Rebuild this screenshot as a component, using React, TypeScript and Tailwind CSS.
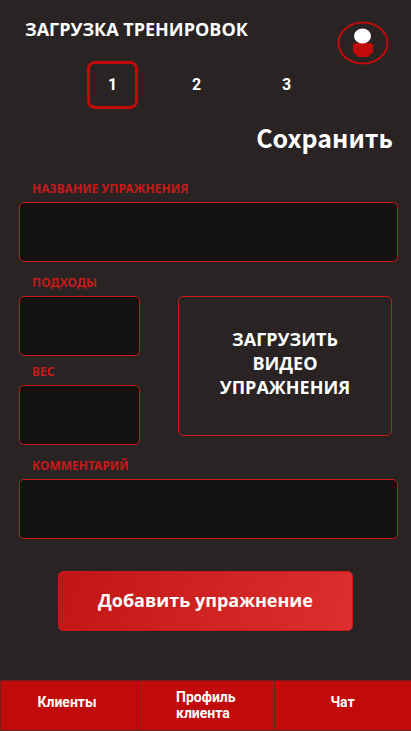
import { useId } from "react";

type FieldProps = { label: string };

function Field({ label }: FieldProps) {
  const id = useId();
  return (
    <div className="flex flex-col">
      <label
        htmlFor={id}
        className="mt-px mb-[3px] ml-[13px] self-start font-['Noto_Sans',sans-serif] text-xs leading-5 font-bold text-[#c61a1a]"
      >
        {label}
      </label>
      <input
        id={id}
        type="text"
        className="h-[60px] w-full rounded-[5px] border border-[#c61a1a] bg-[#131210] px-3 text-base text-white outline-none"
      />
    </div>
  );
}

function Avatar() {
  return (
    <svg width="52" height="44" viewBox="0 0 52 44" aria-hidden="true">
      <ellipse cx="26" cy="22" rx="24.5" ry="20.5" fill="none" stroke="#c10a0a" strokeWidth="2" />
      <path d="M16 23l3-1h14l3 1v8l-5 5H21l-5-5z" fill="#c10a0a" />
      <ellipse cx="25.500" cy="15" rx="8.5" ry="7.500" fill="#fff" />
    </svg>
  );
}

export default function App() {
  return (
    <div className="flex min-h-screen flex-col bg-[#292323] font-['Open_Sans','Noto_Sans',sans-serif] text-white">
      <header className="flex h-[61px] items-start justify-between pt-[17px] pr-[22px] pl-[25px]">
        <h1 className="text-lg leading-6 font-bold">ЗАГРУЗКА ТРЕНИРОВОК</h1>
        <button type="button" aria-label="Профиль" className="mt-1">
          <Avatar />
        </button>
      </header>

      <div className="flex gap-[36px] pl-[87px] font-['Roboto',sans-serif] text-base font-bold">
        <button type="button" className="h-12 w-[51px] rounded-lg border-3 border-[#c10a0a]">1</button>
        <button type="button" className="h-12 w-[45px]">2</button>
        <button type="button" className="h-12 w-[63px]">3</button>
      </div>

      <button
        type="button"
        className="mt-3 mr-[18px] self-end font-['Noto_Sans_CJK_JP','Noto_Sans',sans-serif] text-[25px] leading-8 font-bold"
      >
        Сохранить
      </button>

      <main className="flex flex-1 flex-col pt-[25px] pr-[13px] pl-[19px]">
        <Field label="НАЗВАНИЕ УПРАЖНЕНИЯ" />
        <div className="mt-[10px] flex gap-[38px] pr-[6px]">
          <div className="flex w-[121px] flex-col gap-[5px]">
            <Field label="ПОДХОДЫ" />
            <Field label="ВЕС" />
          </div>
          <button
            type="button"
            className="mt-6 h-[140px] flex-1 rounded-[5px] border border-[#c61a1a] px-8 pb-1.5 text-lg leading-6 font-bold"
          >
            ЗАГРУЗИТЬ ВИДЕО УПРАЖНЕНИЯ
          </button>
        </div>
        <div className="mt-[10px]">
          <Field label="КОММЕНТАРИЙ" />
        </div>
        <button
          type="button"
          className="mt-8 mr-[45px] ml-[39px] h-[60px] rounded-[5px] border border-[#c61a1a] bg-linear-110 from-[#c11414] to-[#de2e2e] pb-0.5 text-lg font-bold"
        >
          Добавить упражнение
        </button>
      </main>

      <nav className="grid h-[51px] grid-cols-3 border-y border-[#6b2222] bg-[#c10a0a] font-['Roboto',sans-serif] text-sm leading-4 font-bold">
        <a href="#clients" className="flex justify-center border-l border-[#6b2222] pt-[13px] pr-1">Клиенты</a>
        <a href="#profile" className="flex justify-center border-l border-[#6b2222] pt-2">
          <span className="w-[60px]">Профиль клиента</span>
        </a>
        <a href="#chat" className="flex justify-center border-l border-[#6b2222] pt-[13px] pr-px">Чат</a>
      </nav>
    </div>
  );
}
